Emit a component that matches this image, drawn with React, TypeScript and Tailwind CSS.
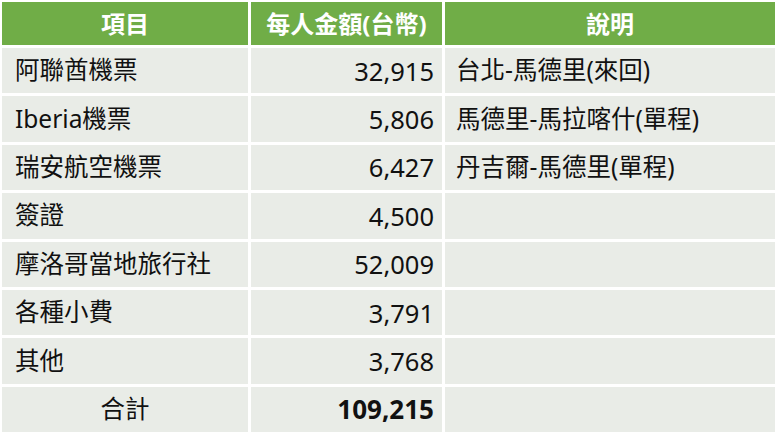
const rows = [
  { item: '阿聯酋機票', amount: '32,915', note: '台北-馬德里(來回)' },
  { item: 'Iberia機票', amount: '5,806', note: '馬德里-馬拉喀什(單程)' },
  { item: '瑞安航空機票', amount: '6,427', note: '丹吉爾-馬德里(單程)' },
  { item: '簽證', amount: '4,500', note: '' },
  { item: '摩洛哥當地旅行社', amount: '52,009', note: '' },
  { item: '各種小費', amount: '3,791', note: '' },
  { item: '其他', amount: '3,768', note: '' },
]

export default function App() {
  return (
    <div
      className="w-[780px] h-[439px] bg-white pl-[2px] pt-[2px] text-[#111]"
      style={{ fontFamily: '"Noto Sans", "Noto Sans CJK TC", sans-serif' }}
    >
      <div className="grid w-[773px] grid-cols-[246px_191px_330px] gap-[3px]">
        {/* header */}
        <div className="h-[43px] bg-[#70ad47] flex items-center justify-center text-white font-bold text-[24px]">項目</div>
        <div className="h-[43px] bg-[#70ad47] flex items-center justify-center text-white font-bold text-[24px]">每人金額(台幣)</div>
        <div className="h-[43px] bg-[#70ad47] flex items-center justify-center text-white font-bold text-[24px]">說明</div>

        {rows.map((r) => (
          <div key={r.item} className="contents">
            <div className="h-[45.4px] bg-[#e9ece7] flex items-center pl-[13px] text-[24.5px]">{r.item}</div>
            <div className="h-[45.4px] bg-[#e9ece7] flex items-center justify-end pr-[8px] text-[25.5px]">{r.amount}</div>
            <div className="h-[45.4px] bg-[#e9ece7] flex items-center pl-[11px] text-[24.5px]">{r.note}</div>
          </div>
        ))}

        {/* total */}
        <div className="h-[45.4px] bg-[#e9ece7] flex items-center justify-center text-[24.5px]">合計</div>
        <div className="h-[45.4px] bg-[#e9ece7] flex items-center justify-end pr-[8px] text-[26px] font-bold">109,215</div>
        <div className="h-[45.4px] bg-[#e9ece7]"></div>
      </div>
    </div>
  )
}
